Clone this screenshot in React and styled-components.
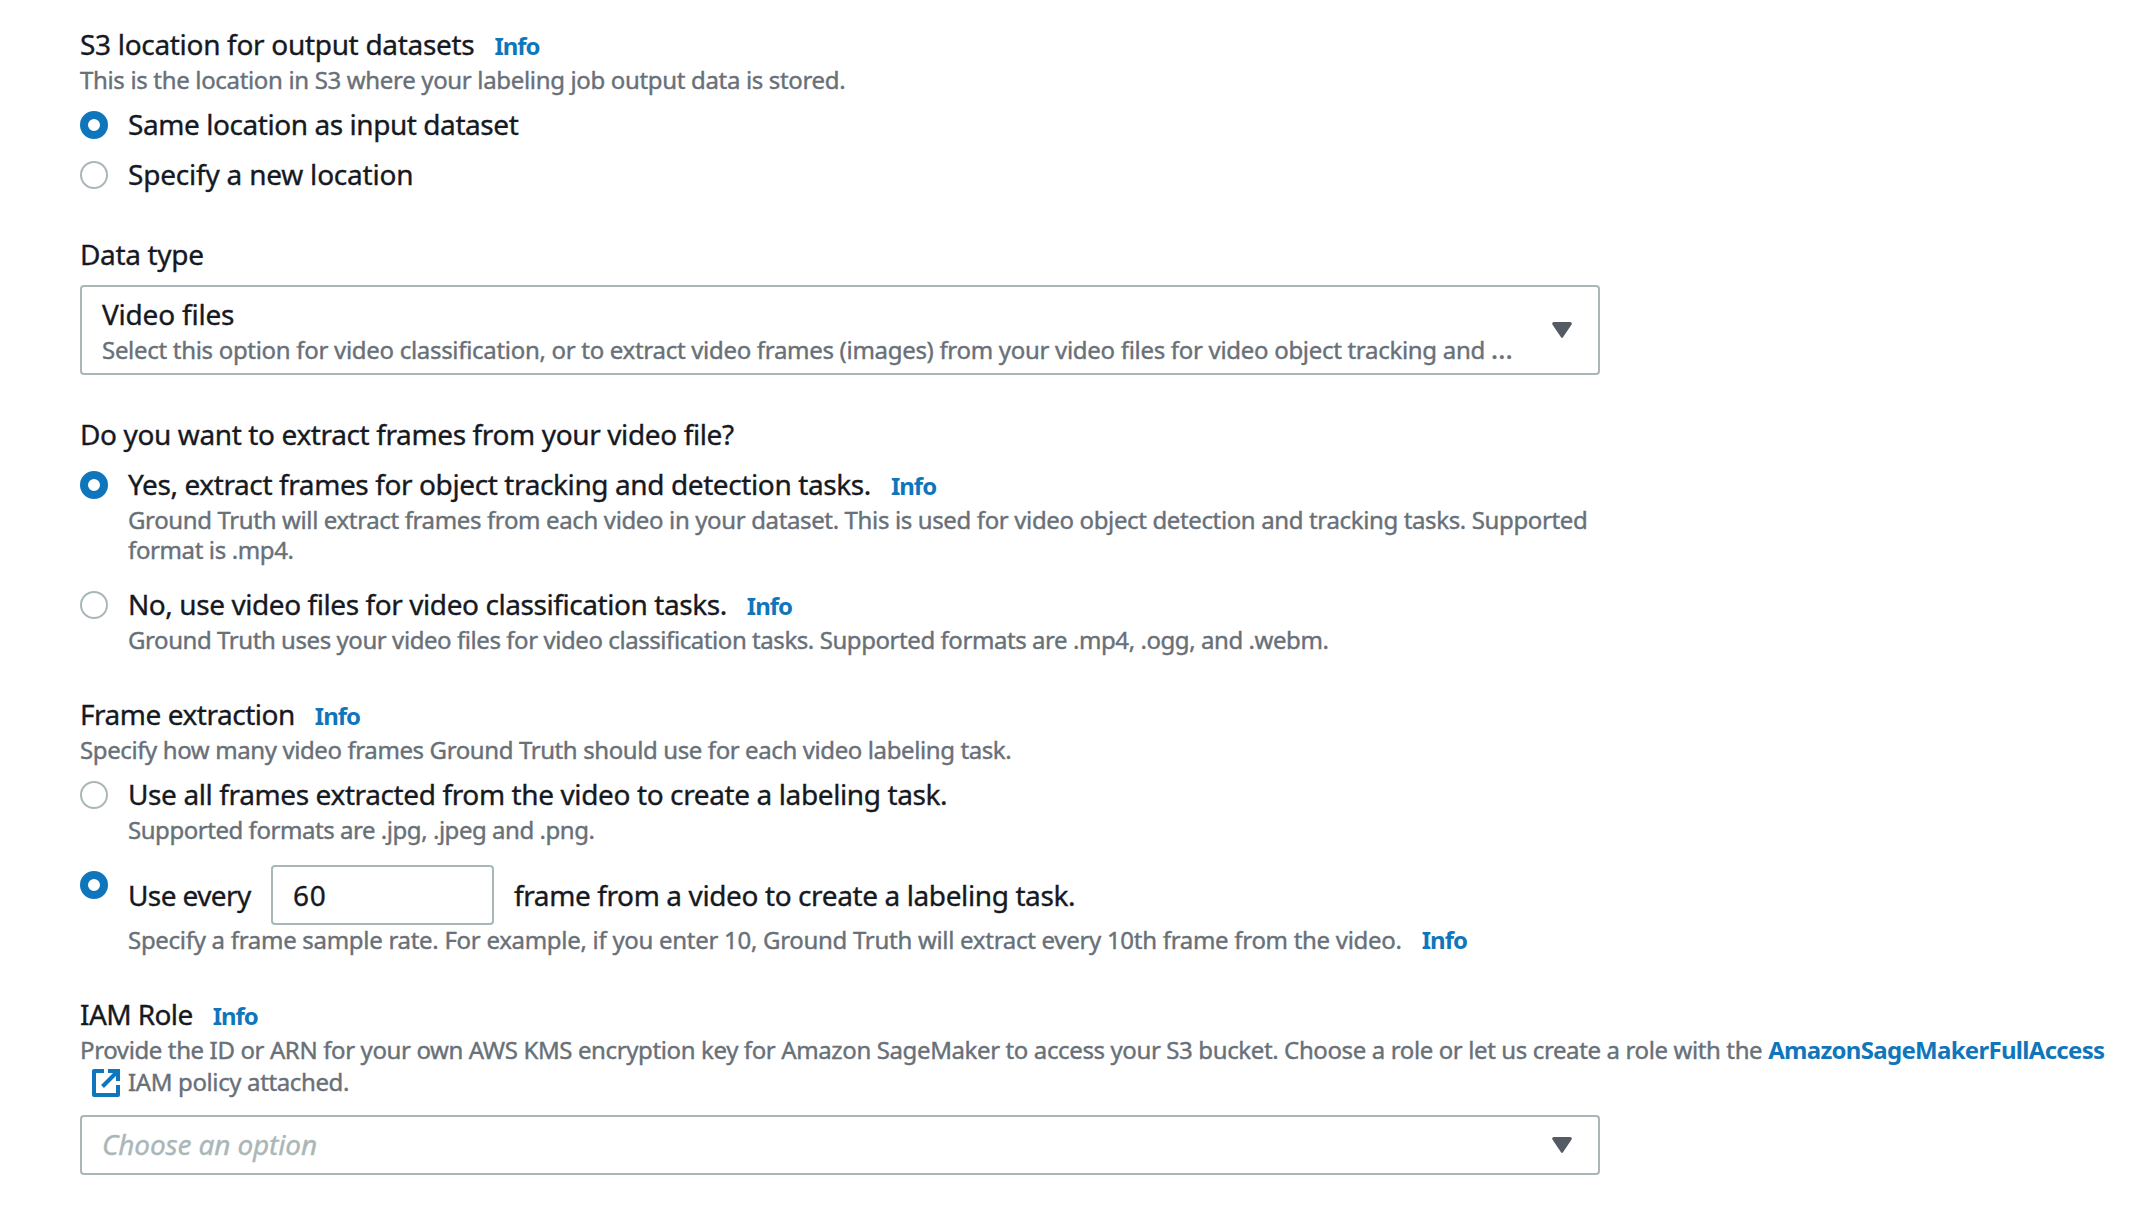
import React, { useState } from "react";
import styled, { createGlobalStyle, css } from "styled-components";

const GlobalStyle = createGlobalStyle`
  *, *::before, *::after { box-sizing: border-box; }
  body {
    margin: 0;
    background: #fff;
    color: #16191f;
    font-family: "Noto Sans", "Open Sans", sans-serif;
  }
`;

const Form = styled.form`
  display: flex;
  flex-direction: column;
  gap: 40px;
  width: 2154px;
  height: 1210px;
  padding: 24px 0 0 80px;
  overflow: hidden;
`;

const Field = styled.section`
  display: flex;
  flex-direction: column;
`;

const Label = styled.div`
  display: flex;
  align-items: baseline;
  height: 40px;
  font-size: 28px;
  line-height: 40px;
  white-space: nowrap;
  -webkit-text-stroke: 0.35px currentColor;
`;

const Text = styled.span`
  letter-spacing: ${(p) => p.$track || 0}px;
`;

const Description = styled.div`
  height: ${(p) => (p.$lines || 1) * 30}px;
  padding-top: 1px;
  color: #687078;
  font-size: 24px;
  line-height: 30px;
  white-space: nowrap;
  -webkit-text-stroke: 0.4px currentColor;
`;

const Line = styled.span`
  display: block;
  letter-spacing: ${(p) => p.$track || 0}px;
`;

const Ellipsis = styled.span`
  font-size: 28px;
  line-height: 0;
`;

const linkStyle = css`
  color: #1076bb;
  font-size: 24px;
  font-weight: 700;
  text-decoration: none;
  -webkit-text-stroke: 0;
`;

const InfoLink = styled.a`
  ${linkStyle}
  margin-left: 20px;
  letter-spacing: -1px;
`;

const PolicyLink = styled.a`
  ${linkStyle}
  letter-spacing: -0.7px;
`;

const Options = styled.div`
  display: flex;
  flex-direction: column;
  gap: ${(p) => p.$gap}px;
  margin-top: 10px;
`;

const Option = styled.label`
  display: grid;
  grid-template-columns: 28px auto;
  column-gap: 20px;
  align-items: start;
  justify-content: start;
`;

const Radio = styled.input`
  appearance: none;
  width: 28px;
  height: 28px;
  margin: 7px 0 0;
  border: 2px solid #aab7b8;
  border-radius: 50%;
  background: #fff;

  &:checked {
    border: 8px solid #1076bb;
  }
`;

const SelectBox = styled.div`
  display: flex;
  align-items: center;
  justify-content: space-between;
  width: 1520px;
  height: ${(p) => p.$height}px;
  margin-top: ${(p) => p.$top}px;
  margin-bottom: ${(p) => p.$bottom || 0}px;
  padding: 0 26px 0 20px;
  border: 2px solid #aab7b8;
  border-radius: 4px;
`;

const SelectValue = styled.div`
  display: flex;
  flex-direction: column;
  height: 72px;
`;

const Placeholder = styled.span`
  padding-bottom: 2px;
  color: #aab7b8;
  font-size: 28px;
  font-style: italic;
  line-height: 40px;
  letter-spacing: -0.15px;
  -webkit-text-stroke: 0.35px currentColor;
`;

const SampleRow = styled.div`
  display: flex;
  align-items: center;
  padding-top: 1px;
  margin-bottom: -1px;
`;

const RateInput = styled.input`
  width: 223px;
  height: 60px;
  margin: 0 20px;
  padding: 0 20px;
  border: 2px solid #aab7b8;
  border-radius: 4px;
  color: #16191f;
  font: 28px/40px "Noto Sans", "Open Sans", sans-serif;
  letter-spacing: 0.8px;
  -webkit-text-stroke: 0.35px currentColor;
`;

const EveryLabel = styled(Label)`
  width: 123px;
`;

const PolicyLine = styled.div`
  display: flex;
  align-items: flex-start;
  height: 46px;
  padding: 5px 0 0 12px;
`;

const PolicyText = styled(Description)`
  margin: -3px 0 0 8px;
`;

const Caret = () => (
  <svg width="20" height="16" viewBox="0 0 20 16">
    <path
      d="M1.8 0H18.2Q20.4 .4 19.6 2.4L11 15.2Q10 16.8 9 15.2L.4 2.4Q-.4 .4 1.8 0Z"
      fill="#545b64"
    />
  </svg>
);

const ExternalIcon = () => (
  <svg width="28" height="28" viewBox="0 0 28 28" fill="none" stroke="#1076bb" strokeWidth="4">
    <path d="M12 2H2V26H26V16" strokeLinejoin="round" />
    <path d="M16 2H26V12" />
    <path d="M26 2L10.5 17.5" />
  </svg>
);

const Info = () => <InfoLink>Info</InfoLink>;

function RadioOption({ name, checked, onSelect, label, track, info, children }) {
  return (
    <Option>
      <Radio type="radio" name={name} checked={checked} onChange={onSelect} />
      <div>
        <Label>
          <Text $track={track}>{label}</Text>
          {info && <Info />}
        </Label>
        {children}
      </div>
    </Option>
  );
}

export default function App() {
  const [location, setLocation] = useState("same");
  const [extract, setExtract] = useState("yes");
  const [frames, setFrames] = useState("every");
  const [rate, setRate] = useState("60");

  return (
    <>
      <GlobalStyle />
      <Form>
        <Field>
          <Label>
            <Text $track={-0.31}>S3 location for output datasets</Text>
            <Info />
          </Label>
          <Description>
            <Line $track={-0.335}>
              This is the location in S3 where your labeling job output data is stored.
            </Line>
          </Description>
          <Options $gap={10}>
            <RadioOption
              name="location"
              label="Same location as input dataset"
              track={-0.435}
              checked={location === "same"}
              onSelect={() => setLocation("same")}
            />
            <RadioOption
              name="location"
              label="Specify a new location"
              track={-0.21}
              checked={location === "new"}
              onSelect={() => setLocation("new")}
            />
          </Options>
        </Field>

        <Field>
          <Label>
            <Text $track={-0.33}>Data type</Text>
          </Label>
          <SelectBox $height={90} $top={11} $bottom={-1}>
            <SelectValue>
              <Label>
                <Text $track={-0.213}>Video files</Text>
              </Label>
              <Description>
                <Line $track={-0.3}>
                  Select this option for video classification, or to extract video frames (images)
                  from your video files for video object tracking and <Ellipsis>…</Ellipsis>
                </Line>
              </Description>
            </SelectValue>
            <Caret />
          </SelectBox>
        </Field>

        <Field>
          <Label>
            <Text $track={-0.377}>Do you want to extract frames from your video file?</Text>
          </Label>
          <Options $gap={20}>
            <RadioOption
              name="extract"
              label="Yes, extract frames for object tracking and detection tasks."
              track={-0.395}
              info
              checked={extract === "yes"}
              onSelect={() => setExtract("yes")}
            >
              <Description $lines={2}>
                <Line $track={-0.364}>
                  Ground Truth will extract frames from each video in your dataset. This is used
                  for video object detection and tracking tasks. Supported
                </Line>
                <Line $track={-0.377}>format is .mp4.</Line>
              </Description>
            </RadioOption>
            <RadioOption
              name="extract"
              label="No, use video files for video classification tasks."
              track={-0.425}
              info
              checked={extract === "no"}
              onSelect={() => setExtract("no")}
            >
              <Description>
                <Line $track={-0.432}>
                  Ground Truth uses your video files for video classification tasks. Supported
                  formats are .mp4, .ogg, and .webm.
                </Line>
              </Description>
            </RadioOption>
          </Options>
        </Field>

        <Field>
          <Label>
            <Text $track={-0.47}>Frame extraction</Text>
            <Info />
          </Label>
          <Description>
            <Line $track={-0.395}>
              Specify how many video frames Ground Truth should use for each video labeling task.
            </Line>
          </Description>
          <Options $gap={20}>
            <RadioOption
              name="frames"
              label="Use all frames extracted from the video to create a labeling task."
              track={-0.385}
              checked={frames === "all"}
              onSelect={() => setFrames("all")}
            >
              <Description>
                <Line $track={-0.455}>Supported formats are .jpg, .jpeg and .png.</Line>
              </Description>
            </RadioOption>
            <Option as="div">
              <Radio
                type="radio"
                name="frames"
                checked={frames === "every"}
                onChange={() => setFrames("every")}
              />
              <div>
                <SampleRow>
                  <EveryLabel>
                    <Text $track={-0.596}>Use every</Text>
                  </EveryLabel>
                  <RateInput value={rate} onChange={(e) => setRate(e.target.value)} />
                  <Label>
                    <Text $track={-0.389}>frame from a video to create a labeling task.</Text>
                  </Label>
                </SampleRow>
                <Description>
                  <Text $track={-0.292}>
                    Specify a frame sample rate. For example, if you enter 10, Ground Truth will
                    extract every 10th frame from the video.
                  </Text>
                  <Info />
                </Description>
              </div>
            </Option>
          </Options>
        </Field>

        <Field>
          <Label>
            <Text $track={-0.6}>IAM Role</Text>
            <Info />
          </Label>
          <Description>
            <Text $track={-0.38}>
              Provide the ID or ARN for your own AWS KMS encryption key for Amazon SageMaker to
              access your S3 bucket. Choose a role or let us create a role with the{" "}
            </Text>
            <PolicyLink>AmazonSageMakerFullAccess</PolicyLink>
          </Description>
          <PolicyLine>
            <ExternalIcon />
            <PolicyText>
              <Text $track={-0.371}>IAM policy attached.</Text>
            </PolicyText>
          </PolicyLine>
          <SelectBox $height={60} $top={5}>
            <Placeholder>Choose an option</Placeholder>
            <Caret />
          </SelectBox>
        </Field>
      </Form>
    </>
  );
}
